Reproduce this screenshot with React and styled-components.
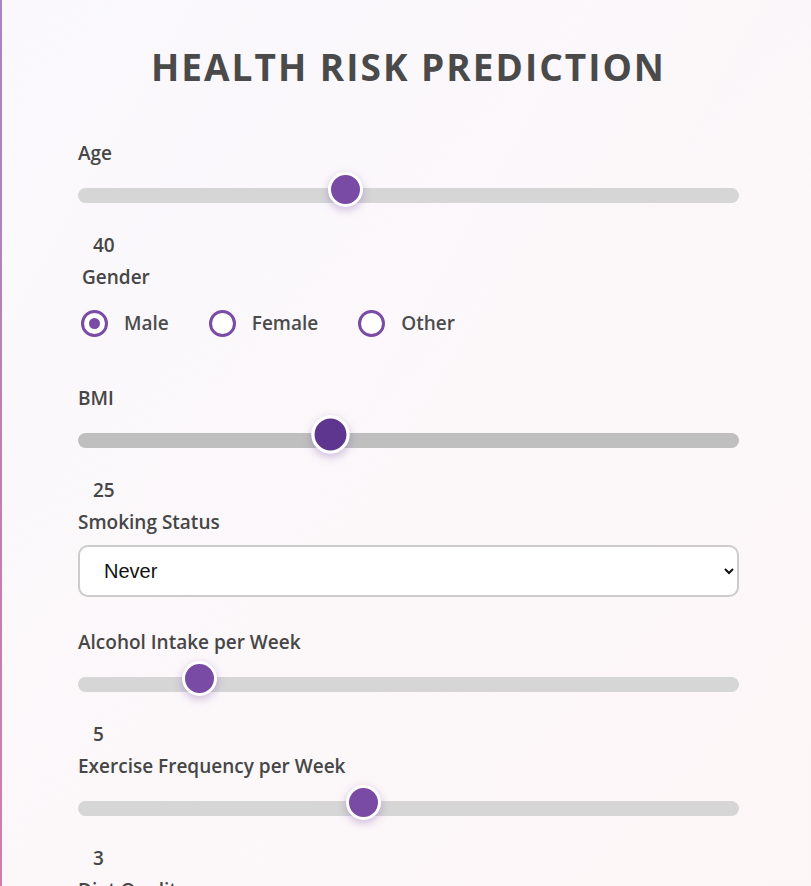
import React, { useState } from 'react';
import styled, { createGlobalStyle } from 'styled-components';

const GlobalStyle = createGlobalStyle`
  html, body {
    margin: 0;
    padding: 0;
  }
  body {
    font-family: 'Open Sans', 'Noto Sans', sans-serif;
    background: linear-gradient(135deg, #f7f5fb 0%, #fcf7f9 45%, #fdf6f7 100%);
    min-height: 100vh;
  }
`;

const Card = styled.div`
  box-sizing: border-box;
  min-height: 100vh;
  padding: 44px 72px 60px 76px;
  border-left: 2px solid;
  border-image: linear-gradient(to bottom, #a686c2 0%, #c27fb0 45%, #df7f9c 100%) 1;
  background: linear-gradient(120deg, rgba(255, 255, 255, 0.35) 0%, rgba(255, 255, 255, 0) 60%);
`;

const Title = styled.h1`
  margin: 0 0 51px;
  text-align: center;
  font-size: 37px;
  line-height: 46px;
  font-weight: 700;
  letter-spacing: 2px;
  color: #4a4a4a;
`;

const Form = styled.form`
  display: flex;
  flex-direction: column;
`;

const Field = styled.div`
  display: flex;
  flex-direction: column;
  margin-bottom: ${(props) => props.$gap || 8}px;
`;

const Label = styled.label`
  font-size: 19px;
  line-height: 24px;
  font-weight: 600;
  color: #464646;
  padding-left: ${(props) => props.$indent || 0}px;
`;

const Range = styled.input.attrs({ type: 'range' })`
  -webkit-appearance: none;
  appearance: none;
  width: 100%;
  height: 15px;
  margin: 23px 0 0;
  background: transparent;
  outline: none;

  &::-webkit-slider-runnable-track {
    height: 15px;
    border-radius: 8px;
    background: ${(props) => (props.$active ? '#bfbfbf' : '#d6d6d6')};
  }

  &::-webkit-slider-thumb {
    -webkit-appearance: none;
    appearance: none;
    box-sizing: border-box;
    width: 35px;
    height: 35px;
    margin-top: -16px;
    border-radius: 50%;
    border: 3px solid #fff;
    background: ${(props) => (props.$active ? '#5e368f' : '#7a4ba5')};
    box-shadow: 0 3px 8px rgba(123, 75, 166, 0.35);
    transform: ${(props) => (props.$active ? 'scale(1.1)' : 'none')};
    cursor: pointer;
  }
`;

const Value = styled.span`
  margin: 30px 0 0 15px;
  font-size: 19px;
  line-height: 24px;
  font-weight: 600;
  color: #464646;
`;

const RadioRow = styled.div`
  display: flex;
  align-items: center;
  gap: 40px;
  margin-top: 21px;
  padding-left: 3px;
`;

const RadioOption = styled.label`
  display: flex;
  align-items: center;
  gap: 16px;
  font-size: 19px;
  line-height: 27px;
  font-weight: 600;
  color: #4c4c4c;
  cursor: pointer;
`;

const Radio = styled.input.attrs({ type: 'radio' })`
  -webkit-appearance: none;
  appearance: none;
  box-sizing: border-box;
  width: 27px;
  height: 27px;
  margin: 0;
  border-radius: 50%;
  border: 3px solid #7a4ba5;
  background: #fff;
  display: grid;
  place-items: center;
  cursor: pointer;

  &::before {
    content: '';
    width: 11px;
    height: 11px;
    border-radius: 50%;
    background: #7a4ba5;
    transform: scale(${(props) => (props.checked ? 1 : 0)});
  }
`;

const Select = styled.select`
  box-sizing: border-box;
  width: 100%;
  height: 52px;
  margin-top: 11px;
  padding: 0 4px 0 20px;
  border: 2px solid #cccccc;
  border-radius: 10px;
  background: #fff;
  font-family: 'Liberation Sans', Arial, sans-serif;
  font-size: 20px;
  color: #111;
  outline: none;
`;

const Submit = styled.button`
  margin-top: 30px;
  height: 52px;
  border: none;
  border-radius: 10px;
  background: #7a4ba5;
  color: #fff;
  font-family: inherit;
  font-size: 18px;
  font-weight: 700;
  letter-spacing: 1px;
`;

const SliderField = ({ label, min, max, value, onChange, active, gap }) => (
  <Field $gap={gap}>
    <Label>{label}</Label>
    <Range min={min} max={max} value={value} $active={active} onChange={(e) => onChange(Number(e.target.value))} />
    <Value>{value}</Value>
  </Field>
);

const App = () => {
  const [age, setAge] = useState(40);
  const [gender, setGender] = useState('Male');
  const [bmi, setBmi] = useState(25);
  const [smoking, setSmoking] = useState('Never');
  const [alcohol, setAlcohol] = useState(5);
  const [exercise, setExercise] = useState(3);
  const [sleep, setSleep] = useState(7);

  return (
    <>
      <GlobalStyle />
      <Card>
        <Title>HEALTH RISK PREDICTION</Title>
        <Form onSubmit={(e) => e.preventDefault()}>
          <SliderField label="Age" min={0} max={100} value={age} onChange={setAge} />

          <Field $gap={49}>
            <Label $indent={4}>Gender</Label>
            <RadioRow>
              {['Male', 'Female', 'Other'].map((g) => (
                <RadioOption key={g}>
                  <Radio name="gender" value={g} checked={gender === g} onChange={() => setGender(g)} />
                  {g}
                </RadioOption>
              ))}
            </RadioRow>
          </Field>

          <SliderField label="BMI" min={10} max={50} value={bmi} onChange={setBmi} active />

          <Field $gap={33}>
            <Label>Smoking Status</Label>
            <Select value={smoking} onChange={(e) => setSmoking(e.target.value)}>
              <option>Never</option>
              <option>Former</option>
              <option>Current</option>
            </Select>
          </Field>

          <SliderField label="Alcohol Intake per Week" min={0} max={30} value={alcohol} onChange={setAlcohol} />
          <SliderField label="Exercise Frequency per Week" min={0} max={7} value={exercise} onChange={setExercise} />

          <Field $gap={33}>
            <Label>Diet Quality</Label>
            <Select defaultValue="Average">
              <option>Poor</option>
              <option>Average</option>
              <option>Good</option>
            </Select>
          </Field>

          <SliderField label="Sleep Hours per Night" min={0} max={12} value={sleep} onChange={setSleep} />

          <Submit type="submit">Predict</Submit>
        </Form>
      </Card>
    </>
  );
};

export default App;
